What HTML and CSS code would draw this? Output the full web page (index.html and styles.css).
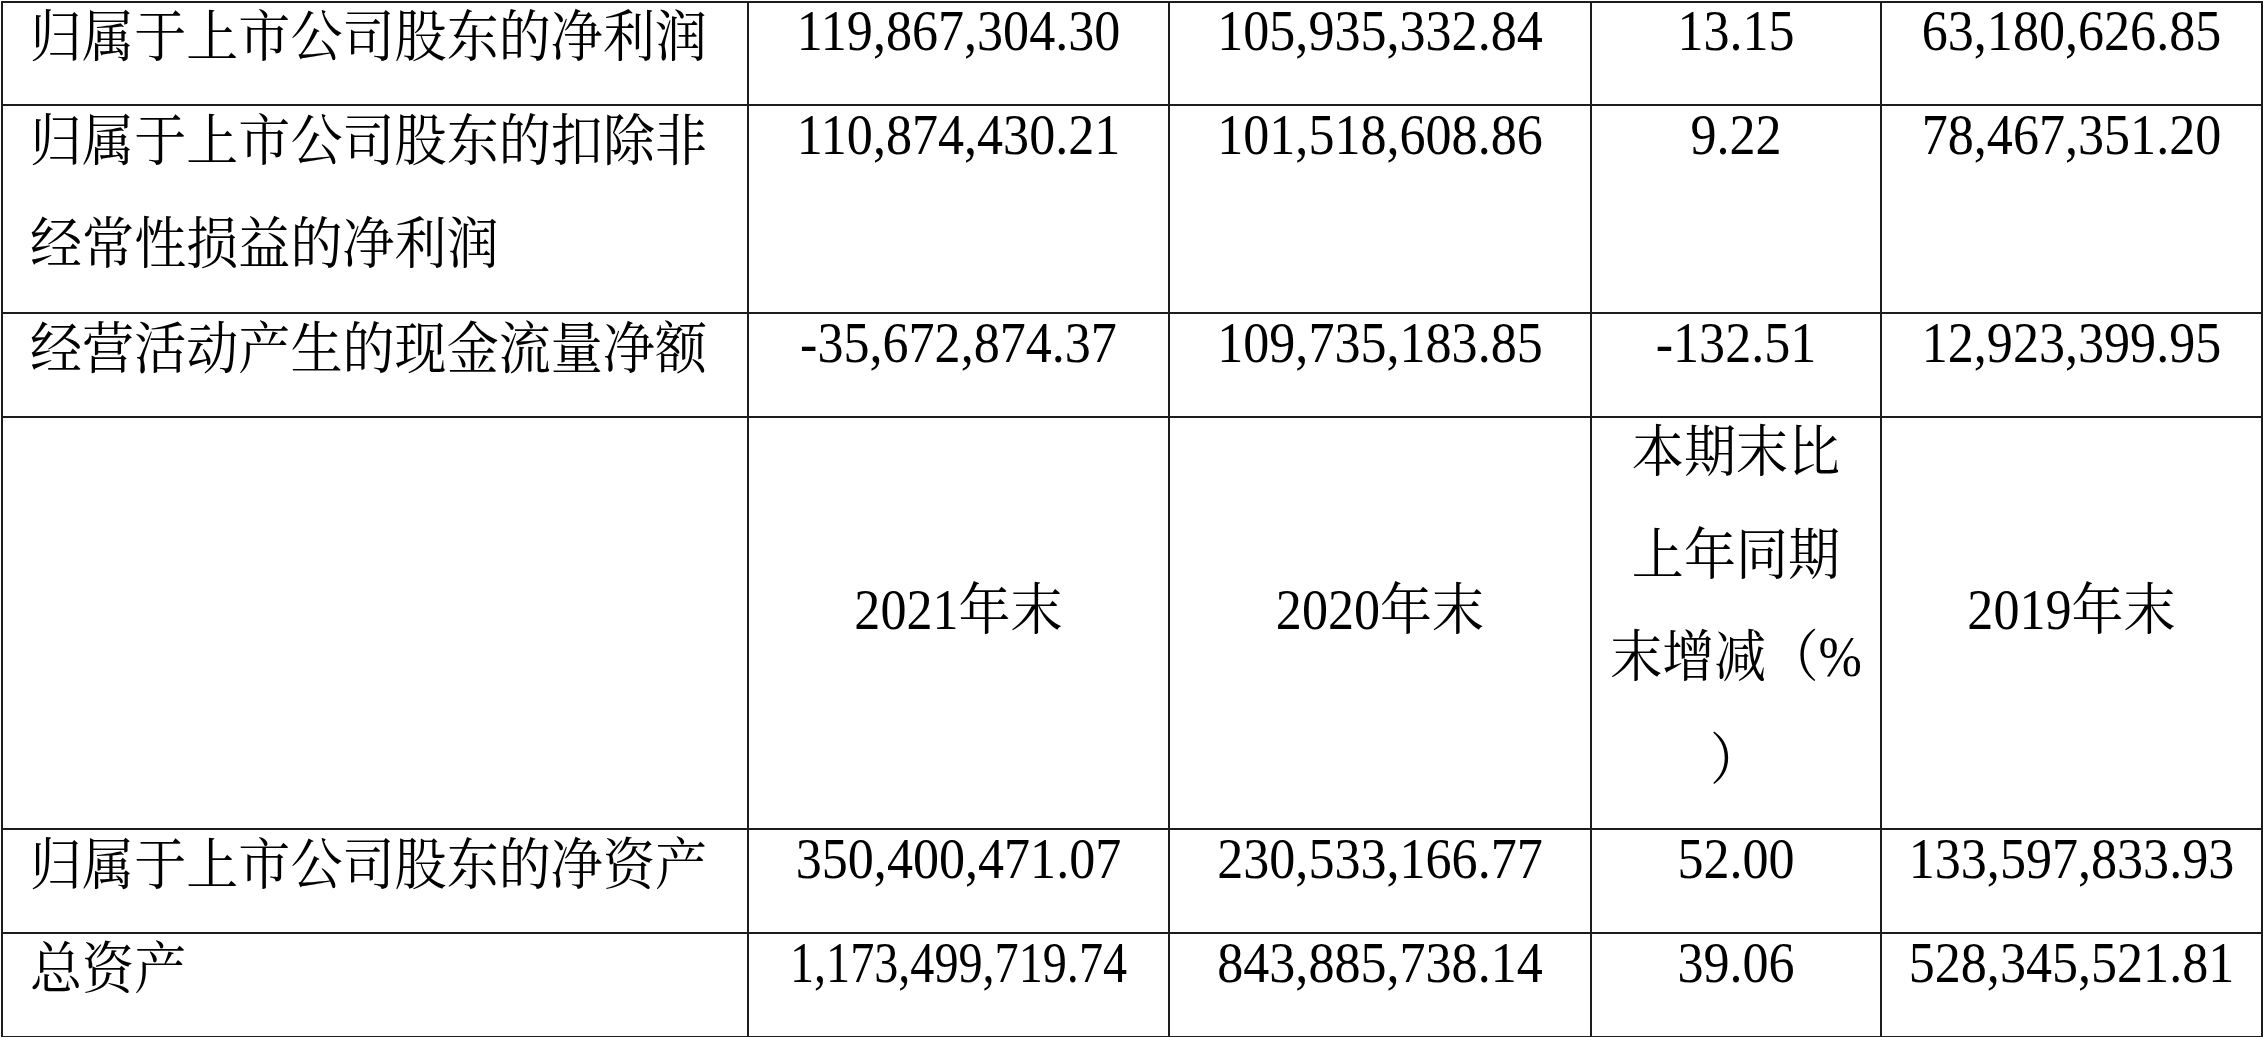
FILE: index.html
```html
<!DOCTYPE html>
<html lang="zh-CN">
<head>
<meta charset="utf-8">
<title>主要会计数据</title>
<link rel="stylesheet" href="styles.css">
</head>
<body>
<table class="fin">
  <colgroup>
    <col class="c-label">
    <col class="c-v1">
    <col class="c-v2">
    <col class="c-pct">
    <col class="c-v3">
  </colgroup>
  <tbody>
    <tr class="first">
      <td class="label"><div class="t">归属于上市公司股东的净利润</div></td>
      <td class="num"><div class="t">119,867,304.30</div></td>
      <td class="num"><div class="t">105,935,332.84</div></td>
      <td class="num"><div class="t">13.15</div></td>
      <td class="num"><div class="t">63,180,626.85</div></td>
    </tr>
    <tr class="two">
      <td class="label"><div class="t">归属于上市公司股东的扣除非<br>经常性损益的净利润</div></td>
      <td class="num"><div class="t">110,874,430.21</div></td>
      <td class="num"><div class="t">101,518,608.86</div></td>
      <td class="num"><div class="t">9.22</div></td>
      <td class="num"><div class="t">78,467,351.20</div></td>
    </tr>
    <tr>
      <td class="label"><div class="t">经营活动产生的现金流量净额</div></td>
      <td class="num"><div class="t">-35,672,874.37</div></td>
      <td class="num"><div class="t">109,735,183.85</div></td>
      <td class="num"><div class="t">-132.51</div></td>
      <td class="num"><div class="t">12,923,399.95</div></td>
    </tr>
    <tr class="four">
      <td class="label"></td>
      <td class="num mid"><div class="t">2021年末</div></td>
      <td class="num mid"><div class="t">2020年末</div></td>
      <td class="num cjk"><div class="t">本期末比<br>上年同期<br>末增减（%<br>）</div></td>
      <td class="num mid"><div class="t">2019年末</div></td>
    </tr>
    <tr>
      <td class="label"><div class="t">归属于上市公司股东的净资产</div></td>
      <td class="num"><div class="t">350,400,471.07</div></td>
      <td class="num"><div class="t">230,533,166.77</div></td>
      <td class="num"><div class="t">52.00</div></td>
      <td class="num"><div class="t">133,597,833.93</div></td>
    </tr>
    <tr>
      <td class="label"><div class="t">总资产</div></td>
      <td class="num tight"><div class="t">1,173,499,719.74</div></td>
      <td class="num"><div class="t">843,885,738.14</div></td>
      <td class="num"><div class="t">39.06</div></td>
      <td class="num"><div class="t">528,345,521.81</div></td>
    </tr>
  </tbody>
</table>
</body>
</html>
```

FILE: styles.css
```css
html, body {
  margin: 0;
  padding: 0;
  background: #ffffff;
}

body {
  font-family: "Liberation Serif", "Noto Serif CJK SC", "Noto Sans CJK SC", serif;
  color: #000000;
  padding: 1px 0 0 1px;
}

.fin {
  border-collapse: collapse;
  table-layout: fixed;
  width: 2261px;
  font-size: 56px;
}

.c-label { width: 746px; }
.c-v1 { width: 421px; }
.c-v2 { width: 422px; }
.c-pct { width: 290px; }
.c-v3 { width: 381px; }

.fin td {
  border: 2px solid #1c1c1c;
  padding: 0;
  line-height: 102px;
  vertical-align: top;
  white-space: nowrap;
  overflow: visible;
}

.fin .first td { line-height: 101px; }
.fin .two td { line-height: 103px; }
.fin .four td { line-height: 102.5px; }

.t {
  display: block;
  transform: scaleX(0.93);
  transform-origin: center center;
  margin: -22px 0 22px;
}

.label {
  text-align: left;
  padding-left: 27px !important;
}

.label .t {
  transform-origin: left center;
  margin: -16px 0 16px;
}

.cjk .t {
  margin: -17px 0 17px;
}

.num {
  text-align: center;
}

.fin td.mid {
  vertical-align: middle;
}

.mid .t {
  margin: -13px 0 13px;
}

.tight .t {
  transform: scaleX(0.86);
}
```
